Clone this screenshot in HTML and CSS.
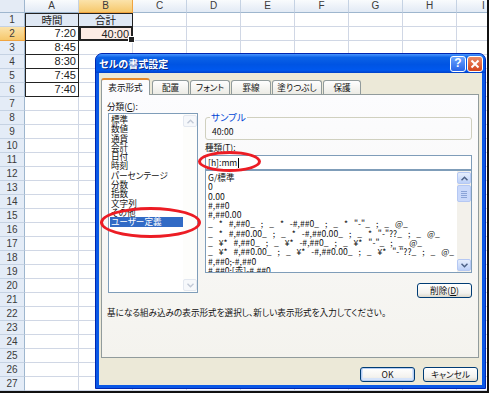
FILE: index.html
```html
<!DOCTYPE html>
<html lang="ja">
<head>
	<meta charset="UTF-8">
	<title>セルの書式設定</title>
	<link rel="stylesheet" href="styles.css">
</head>
<body>
<div class="screen">
	<!-- シート -->
	<div class="sheet">
		<div class="corner"></div>
		<div class="colhead">A</div>
		<div class="colhead sel">B</div>
		<div class="colhead">C</div>
		<div class="colhead">D</div>
		<div class="colhead">E</div>
		<div class="colhead">F</div>
		<div class="colhead">G</div>
		<div class="colhead">H</div>
		<div class="colhead">I</div>

		<div class="rowhead">1</div>
		<div class="rowhead sel">2</div>
		<div class="rowhead">3</div>
		<div class="rowhead">4</div>
		<div class="rowhead">5</div>
		<div class="rowhead">6</div>
		<div class="rowhead">7</div>
		<div class="rowhead">8</div>
		<div class="rowhead">9</div>
		<div class="rowhead">10</div>
		<div class="rowhead">11</div>
		<div class="rowhead">12</div>
		<div class="rowhead">13</div>
		<div class="rowhead">14</div>
		<div class="rowhead">15</div>
		<div class="rowhead">16</div>
		<div class="rowhead">17</div>
		<div class="rowhead">18</div>
		<div class="rowhead">19</div>
		<div class="rowhead">20</div>
		<div class="rowhead">21</div>
		<div class="rowhead">22</div>
		<div class="rowhead">23</div>
		<div class="rowhead">24</div>
		<div class="rowhead">25</div>
		<div class="rowhead">26</div>
		<div class="rowhead">27</div>

		<div class="gridlines"></div>

		<div class="cell head ca r1">時間</div>
		<div class="cell head cb r1">合計</div>
		<div class="cell num ca r2">7:20</div>
		<div class="cell num ca r3">8:45</div>
		<div class="cell num ca r4">8:30</div>
		<div class="cell num ca r5">7:45</div>
		<div class="cell num ca r6">7:40</div>
		<div class="cell num cb r2 active">40:00</div>
	</div>

	<!-- ダイアログ -->
	<div class="dialog">
		<div class="titlebar">
			<span class="caption">セルの書式設定</span>
			<span class="tbtn help">?</span>
			<span class="tbtn close">
				<svg width="10" height="10" viewBox="0 0 10 10"><path d="M1.5 1.5 L8.5 8.5 M8.5 1.5 L1.5 8.5" stroke="#fff" stroke-width="2"/></svg>
			</span>
		</div>
		<div class="dlg-body">
			<div class="tabs">
				<span class="tab active">表示形式</span>
				<span class="tab">配置</span>
				<span class="tab">フォント</span>
				<span class="tab">罫線</span>
				<span class="tab">塗りつぶし</span>
				<span class="tab">保護</span>
			</div>
			<div class="panel">
				<div class="cols">
					<div class="left">
						<div class="label">分類(<u>C</u>):</div>
						<div class="listbox cat">
							<ul class="items">
								<li>標準</li>
								<li>数値</li>
								<li>通貨</li>
								<li>会計</li>
								<li>日付</li>
								<li>時刻</li>
								<li>パーセンテージ</li>
								<li>分数</li>
								<li>指数</li>
								<li>文字列</li>
								<li>その他</li>
								<li class="picked">ユーザー定義</li>
							</ul>
							<div class="vscroll off">
								<span class="arrow"><svg width="7" height="5" viewBox="0 0 7 5"><path d="M0.5 4.2 L3.5 1.2 L6.5 4.2" fill="none" stroke="#c2c9d6" stroke-width="1.4"/></svg></span>
								<span class="arrow"><svg width="7" height="5" viewBox="0 0 7 5"><path d="M0.5 0.8 L3.5 3.8 L6.5 0.8" fill="none" stroke="#c2c9d6" stroke-width="1.4"/></svg></span>
							</div>
						</div>
					</div>
					<div class="right">
						<fieldset class="sample">
							<legend>サンプル</legend>
							<div class="sample-val">40:00</div>
						</fieldset>
						<div class="label">種類(<u>T</u>):</div>
						<div class="input">[h]:mm<span class="caret"></span></div>
						<div class="listbox fmt">
							<ul class="items">
								<li>G/標準</li>
								<li>0</li>
								<li>0.00</li>
								<li>#,##0</li>
								<li>#,##0.00</li>
								<li>_ * #,##0_ ; _ * -#,##0_ ; _ * "-"_ ; _ @_</li>
								<li>_ * #,##0.00_ ; _ * -#,##0.00_ ; _ * "-"??_ ; _ @_</li>
								<li>_ ¥* #,##0_ ; _ ¥* -#,##0_ ; _ ¥* "-"_ ; _ @_</li>
								<li>_ ¥* #,##0.00_ ; _ ¥* -#,##0.00_ ; _ ¥* "-"??_ ; _ @_</li>
								<li>#,##0;-#,##0</li>
								<li>#,##0;[赤]-#,##0</li>
							</ul>
							<div class="vscroll xp">
								<span class="arrow"><svg width="7" height="5" viewBox="0 0 7 5"><path d="M0.5 4.2 L3.5 1.2 L6.5 4.2" fill="none" stroke="#4d6185" stroke-width="1.5"/></svg></span>
								<span class="thumb"></span>
								<span class="track"></span>
								<span class="arrow"><svg width="7" height="5" viewBox="0 0 7 5"><path d="M0.5 0.8 L3.5 3.8 L6.5 0.8" fill="none" stroke="#4d6185" stroke-width="1.5"/></svg></span>
							</div>
						</div>
						<div class="delrow"><span class="btn del">削除(<u>D</u>)</span></div>
					</div>
				</div>
				<p class="desc">基になる組み込みの表示形式を選択し、新しい表示形式を入力してください。</p>
			</div>
			<div class="footer">
				<span class="btn default">OK</span>
				<span class="btn">キャンセル</span>
			</div>
		</div>
	</div>

	<!-- 注釈の赤丸 -->
	<div class="mark mark-cat"></div>
	<div class="mark mark-type"></div>
</div>
</body>
</html>
```

FILE: styles.css
```css
*{margin:0;padding:0;box-sizing:border-box;}
ul{list-style:none;}
body{background:#fff;font-family:"Noto Sans CJK JP",sans-serif;}
.screen{position:relative;width:489px;height:393px;overflow:hidden;border-right:2px solid #111;border-bottom:2px solid #111;}

/* sheet */
.sheet{display:grid;grid-template-columns:25px repeat(9,54px);grid-template-rows:13px repeat(27,14px);font-family:"Liberation Sans",sans-serif;color:#222;}
.corner{background:#e4ebf5;border-right:1px solid #9eb6ce;border-bottom:1px solid #9eb6ce;}
.colhead{background:linear-gradient(#f9fbfd,#e2eaf5);border-right:1px solid #c5d2e3;border-bottom:1px solid #9eb6ce;font-size:10px;line-height:12px;text-align:center;color:#3b3b3b;}
.rowhead{grid-column:1;background:#e4ecf7;border-right:1px solid #9eb6ce;border-bottom:1px solid #c5d2e3;font-size:10px;line-height:13px;text-align:center;color:#3b3b3b;}
.colhead.sel,.rowhead.sel{background:linear-gradient(#fbe3ab,#f6c86c);border-color:#f0a440;}
.gridlines{grid-area:2/2/-1/-1;background-image:repeating-linear-gradient(to right,transparent 0 53px,#d0d7e5 53px 54px),repeating-linear-gradient(to bottom,transparent 0 13px,#d0d7e5 13px 14px);}
.cell{border-right:1px solid #222;border-bottom:1px solid #222;font-size:11px;line-height:13px;}
.ca{grid-column:2;border-left:1px solid #222;}
.cb{grid-column:3;}
.r1{grid-row:2;border-top:1px solid #222;}
.r2{grid-row:3;}
.r3{grid-row:4;}
.r4{grid-row:5;}
.r5{grid-row:6;}
.r6{grid-row:7;}
.cell.head{background:#dfe8f4;text-align:center;font-family:"Noto Sans CJK JP",sans-serif;font-size:10.5px;line-height:12px;}
.cell.num{text-align:right;padding-right:2px;}
.cell.active{position:relative;background:#fcece5;border:2px solid #222;border-top-width:1px;}
.cell.active::after{content:"";position:absolute;right:-4px;bottom:-4px;width:5px;height:5px;background:#222;border:1px solid #fff;}

/* dialog */
.dialog{position:absolute;left:95px;top:53px;width:391px;height:336px;display:flex;flex-direction:column;background:#0a58e6;border:1px solid #0026b0;border-radius:7px 7px 0 0;font-size:8.6px;line-height:11px;color:#111;font-feature-settings:"palt";}
.titlebar{height:19px;display:flex;align-items:center;padding:0 2px 0 3px;background:linear-gradient(#4a95ff 0,#0b62e6 18%,#0054e3 55%,#0058ee 85%,#0040c8 100%);border-radius:6px 6px 0 0;}
.caption{flex:1;color:#fff;font-weight:bold;font-size:10px;text-shadow:1px 1px 0 #0a2a8a;}
.tbtn{width:16px;height:16px;border:1px solid #fff;border-radius:3px;display:flex;align-items:center;justify-content:center;margin-left:1px;}
.help{background:linear-gradient(#6ba4ff,#2864e8);color:#fff;font-family:"Liberation Sans",sans-serif;font-weight:bold;font-size:12px;}
.close{background:linear-gradient(#ec8a66,#d3441c);}
.dlg-body{flex:1;margin:0 3px 3px;background:#ece9d8;display:flex;flex-direction:column;}

.tabs{display:flex;align-items:flex-end;height:21px;padding:5px 0 0 2px;}
.tab{height:14px;margin-left:1px;text-align:center;background:linear-gradient(#fefefe,#ecebe5);border:1px solid #919b9c;border-bottom:none;border-radius:3px 3px 0 0;line-height:12px;}
.tab:nth-child(2){width:37px;margin-left:2px;}
.tab:nth-child(3){width:40px;}
.tab:nth-child(4){width:40px;}
.tab:nth-child(5){width:50px;}
.tab:nth-child(6){width:38px;}
.tab.active{width:49px;height:17px;margin:0 0 -1px 0;position:relative;background:#fcfcfe;border-top:2px solid #e68b2c;line-height:14px;}

.panel{height:264px;margin:0 3px 0 2px;border:1px solid #919b9c;background:linear-gradient(#fcfcfe,#f4f3ee);padding:6px 6px 0;}
.cols{display:flex;gap:7px;}
.left{width:90px;}
.right{flex:1;}
.label{line-height:11px;}
.left .label{margin-left:-1px;}

.listbox{display:flex;border:1px solid #7f9db9;background:#fff;overflow:hidden;}
.listbox .items{flex:1;line-height:9.3px;padding:1px 0 0 1px;overflow:hidden;}
.listbox .items li{padding-left:1px;white-space:pre;}
.cat{height:180px;margin-top:1px;}
.cat .picked{background:#316ac5;color:#fff;}
.fmt{height:103px;}
.fmt .items{padding-top:2px;word-spacing:4px;}

.vscroll{width:14px;display:flex;flex-direction:column;}
.vscroll .arrow{height:12px;display:flex;align-items:center;justify-content:center;border-radius:2px;}
.vscroll.off{justify-content:space-between;background:#fdfdfb;padding:1px 0;}
.vscroll.off .arrow{border:1px solid #e3e8f0;background:#f6f8fb;}
.vscroll.xp{background:#f3f1eb;padding:1px 0;}
.vscroll.xp .arrow{border:1px solid #b5c8f3;background:linear-gradient(#e6eefc,#bcd0f8);}
.vscroll.xp .thumb{height:17px;margin-top:1px;border:1px solid #b5c8f3;border-radius:2px;background-color:#cad9fb;background-image:repeating-linear-gradient(to bottom,transparent 0 1px,#8ba4d8 1px 2px);background-size:6px 8px;background-position:3px 4px;background-repeat:no-repeat;}
.vscroll.xp .track{flex:1;}

.sample{margin-top:11px;border:1px solid #d0d0bf;border-radius:3px;padding:3px 6px 2px;}
.sample legend{color:#0046d5;padding:0 1px;margin-left:-2px;line-height:11px;font-size:9.5px;}
.sample-val{line-height:11px;}
.right .label{margin-top:2px;}
.input{height:15px;margin-top:2px;border:1px solid #7f9db9;background:#fff;padding-left:2px;line-height:13px;display:flex;align-items:center;}
.caret{display:inline-block;width:1px;height:10px;background:#000;margin-left:1px;}
.delrow{display:flex;justify-content:flex-end;margin-top:10px;}

.btn{height:15px;display:flex;align-items:center;justify-content:center;border:1px solid #003c74;border-radius:3px;background:linear-gradient(#fff,#f3f2ee 70%,#dcd8cc);line-height:13px;}
.del{width:55px;}
.desc{margin-top:8px;line-height:12px;margin-left:-1px;}

.footer{height:27px;display:flex;justify-content:flex-end;gap:8px;padding:9px 4px 0 0;}
.footer .btn{width:55px;}
.btn.default{box-shadow:inset 0 0 0 1px #b4cdf5,inset 0 -1px 0 2px #d6e4fa;}

/* annotation */
.mark{position:absolute;border:3px solid #ec1c24;border-radius:50%;}
.mark-cat{left:100px;top:207px;width:101px;height:31px;}
.mark-type{left:198px;top:151px;width:63px;height:21px;}
```
